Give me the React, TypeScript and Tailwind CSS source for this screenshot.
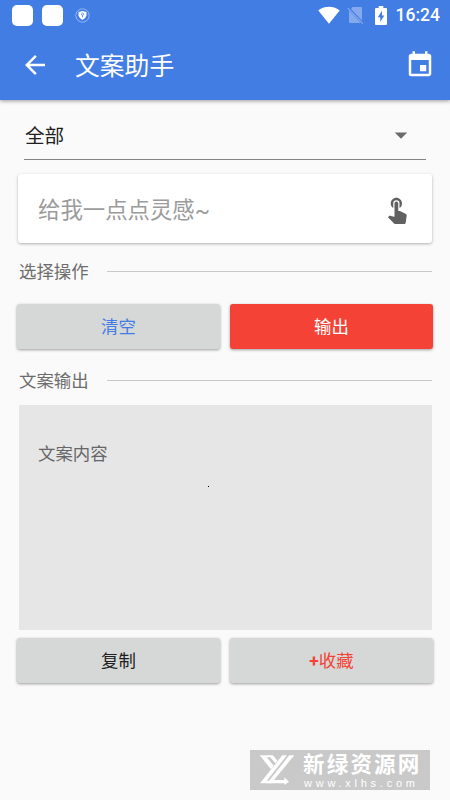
import React from "react"
import { MdArrowBack, MdArrowDropDown, MdEvent, MdSignalWifi4Bar, MdTouchApp } from "react-icons/md"

function NoSimIcon() {
  return (
    <svg width="17" height="18" viewBox="0 0 17 18" className="text-[#84a9ed]">
      <path d="M5.6 1H14Q15 1 15 2V14.6L4 3ZM2 4.6L13.8 17H3Q2 17 2 16Z" fill="currentColor" />
      <path d="M.8 2.2L15.8 17.6" stroke="currentColor" strokeWidth="1.2" />
    </svg>
  )
}

function BatteryIcon() {
  return (
    <svg width="12" height="19" viewBox="0 0 12 19">
      <path
        d="M3.7 0H8.3V2H11Q12 2 12 3V18Q12 19 11 19H1Q0 19 0 18V3Q0 2 1 2H3.7ZM7 4.8L2.8 11.3H5.3V16L9.3 9.5H7Z"
        fill="#fff"
        fillRule="evenodd"
      />
    </svg>
  )
}

function ShieldIcon() {
  return (
    <svg width="15" height="15" viewBox="0 0 15 15">
      <circle cx="7.5" cy="7.5" r="6.7" fill="none" stroke="#a9c5f5" strokeWidth="0.8" />
      <path d="M7.5 3L11.5 4V7.6Q11.1 10 7.5 12Q3.9 10 3.5 7.6V4Z" fill="#fff" />
      <circle cx="7.5" cy="6.2" r="1.1" fill="none" stroke="#427de4" strokeWidth="0.7" />
      <path d="M7.5 7.3V9.3" stroke="#427de4" strokeWidth="0.8" />
    </svg>
  )
}

function StatusBar() {
  return (
    <div className="flex h-[30px] items-center pl-3 pr-[10px] text-white">
      <div className="h-[21px] w-[21px] rounded-[5px] bg-white" />
      <div className="ml-[9px] h-[21px] w-[21px] rounded-[5px] bg-white" />
      <div className="ml-3">
        <ShieldIcon />
      </div>
      <MdSignalWifi4Bar className="ml-auto h-[22px] w-[22px]" />
      <div className="ml-[7px]">
        <NoSimIcon />
      </div>
      <div className="ml-[11px]">
        <BatteryIcon />
      </div>
      <span className="ml-[9px] font-['Roboto',sans-serif] text-[17.5px] leading-5 font-medium">16:24</span>
    </div>
  )
}

function SectionTitle({ children }: { children: React.ReactNode }) {
  return (
    <div className="flex h-6 items-center text-[17.4px] leading-6 text-[#6d6d6d]">
      <span className="w-[88px] shrink-0 pb-0.5">{children}</span>
      <div className="mb-px h-px flex-1 bg-[#c8c8c8]" />
    </div>
  )
}

function ActionButton({ className, children }: { className: string; children: React.ReactNode }) {
  return (
    <button
      className={`h-[45px] rounded-[3px] text-[17.4px] leading-6 shadow-[0_1px_3px_rgba(0,0,0,0.38)] ${className}`}
    >
      {children}
    </button>
  )
}

function Watermark() {
  return (
    <div className="absolute top-[750px] left-[250px] flex h-10 w-[180px] bg-[#c9c9c9] text-white">
      <svg width="37" height="32" viewBox="0 0 111 96" className="mt-[3px] ml-[9px] shrink-0">
        <path d="M2 7H18L44 38L36 49Z" fill="#fff" />
        <path d="M18 7H42L55 23L49 31L34 13H23Z" fill="#fff" />
        <path d="M70 7H84L23 83H42L36 91H3Z" fill="#fff" />
        <path d="M91 7H106L45 81H76V73L90 86L76 96V91H24Z" fill="#fff" />
      </svg>
      <div className="ml-[7px] font-['Liberation_Sans','Noto_Sans_CJK_SC',sans-serif]">
        <div className="mt-[3px] h-[25px] text-[21.5px] leading-[25px] font-bold tracking-[2.2px] whitespace-nowrap">
          新绿资源网
        </div>
        <div className="ml-px text-[11px] leading-[10px] tracking-[3.75px] whitespace-nowrap">www.xlhs.com</div>
      </div>
    </div>
  )
}

export default function App() {
  return (
    <div className="relative h-[800px] w-[450px] overflow-hidden bg-[#fafafa] font-['Noto_Sans_CJK_SC',sans-serif]">
      <header className="h-[100px] bg-[#427de4] shadow-[0_1px_4px_rgba(0,0,0,0.4)]">
        <StatusBar />
        <div className="flex h-[70px] items-center pr-[15px] pl-5 text-white">
          <MdArrowBack className="h-[30px] w-[30px]" />
          <h1 className="ml-[25px] pb-0.5 text-[24.8px] leading-9">文案助手</h1>
          <MdEvent className="ml-auto h-[30px] w-[30px]" />
        </div>
      </header>

      <main className="px-[18px]">
        <div className="mx-[6px] flex h-[60px] items-center border-b-[1.5px] border-[#858585] pt-[11px] pl-px">
          <span className="text-[19.6px] leading-7 text-[#202020]">全部</span>
          <MdArrowDropDown className="mr-[10px] ml-auto h-[30px] w-[30px] text-[#6b6b6b]" />
        </div>

        <div className="mt-[14px] flex h-[69px] items-center rounded-[3px] bg-white pr-5 pl-5 shadow-[0_1px_3px_rgba(0,0,0,0.3)]">
          <span className="text-[22.4px] leading-8 text-[#9b9b9b]">
            给我一点点灵感<span className="font-['Roboto',sans-serif]">~</span>
          </span>
          <MdTouchApp className="ml-auto h-[30px] w-[30px] text-[#616161]" />
        </div>

        <div className="mt-[17px] pl-px">
          <SectionTitle>选择操作</SectionTitle>
        </div>
        <div className="-mx-px mt-5 grid grid-cols-2 gap-[10px]">
          <ActionButton className="bg-[#d6d8d7] pb-0.5 text-[#427de4]">清空</ActionButton>
          <ActionButton className="bg-[#f44336] pb-0.5 text-white">输出</ActionButton>
        </div>

        <div className="mt-5 pl-px">
          <SectionTitle>文案输出</SectionTitle>
        </div>
        <div className="mt-3 ml-px h-[225px] bg-[#e6e6e6] pt-9 pl-[19px] text-[17.4px] leading-6 text-[#666666]">
          <p>文案内容</p>
          <div className="mt-[21px] ml-[170px] h-px w-px bg-black" />
        </div>
        <div className="-mx-px mt-2 grid grid-cols-2 gap-[10px]">
          <ActionButton className="bg-[#d6d8d7] pb-0.5 text-[#202020]">复制</ActionButton>
          <ActionButton className="bg-[#d6d8d7] text-[#f44336]">
            <span className="font-['Roboto',sans-serif] font-bold">+</span>收藏
          </ActionButton>
        </div>
      </main>

      <Watermark />
    </div>
  )
}
